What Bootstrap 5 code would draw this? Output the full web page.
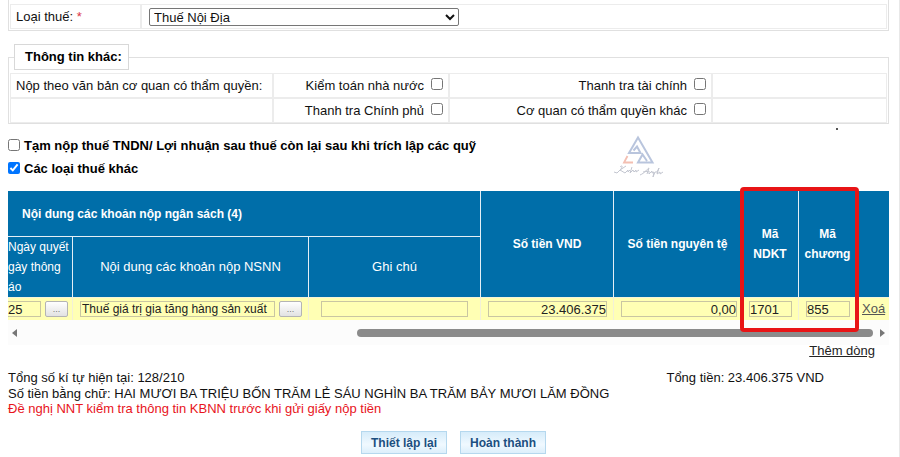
<!DOCTYPE html>
<html lang="vi">
<head>
<meta charset="utf-8">
<meta name="viewport" content="width=device-width, initial-scale=1">
<title>Giấy nộp tiền</title>
<link rel="stylesheet" href="https://cdn.jsdelivr.net/npm/bootstrap@5.3.0/dist/css/bootstrap.min.css">
<style>
body{font-family:"Liberation Sans",Arial,sans-serif;font-size:13px;line-height:16px;color:#111;background:#fff}
.page{padding:0 10px 0 8px;border-right:1px solid #e8e8e8;min-height:100vh}
input[type=checkbox]{width:12px;height:12px;margin:0;flex:none}
.panel{border:1px solid #e0e0e0;border-top:0;padding:4px 1px 1px}
.panel table,.other table{width:100%;table-layout:fixed;border-collapse:separate;border-spacing:0}
.panel td,.other td{border:1px solid #ececec;height:25px;padding:0 5px;vertical-align:middle}
.c-label{width:131px}
.c-doc{width:263px}.c-a{width:176px}.c-b{width:263px}
.tax-type{width:310px;height:18px;font-size:13px;line-height:16px;padding:0;margin-left:2px;border:1px solid #767676;border-radius:2px;background:#fff;color:#111}
.other{border:1px solid #e0e0e0;padding:0 1px;margin:13px 0 0}
.other legend{float:none;width:auto;font-size:13px;line-height:16px;font-weight:bold;border:1px solid #d8d8d8;padding:4px 6px 4px 10px;margin:0 0 3px 4px;color:#000}
.tick{gap:7px}
.tick input{margin-bottom:4px}
.opts{padding-top:14px;gap:7px;color:#000}
.opts label{gap:4px}
.opts input{margin-bottom:3px}
.logo-mark{right:223px;top:10px;width:54px;height:46px}
.speck{right:51px;top:4px;width:2px;height:2px;background:#555}
.grid-wrap{margin-top:14px}
.grid-table{width:100%;table-layout:fixed;border-collapse:separate;border-spacing:0}
.grid-table th{background:#006ea9;color:#fff;text-align:center;vertical-align:middle;font-size:12px;line-height:20px;border-right:1px solid #e4eff6;padding:0}
.grid-table th.sub{font-weight:normal;font-size:13px;height:61px;border-top:1px solid #e4eff6}
.grid-table th.top-head{height:45px;text-align:left;padding-left:14px}
.grid-table th.date-head{text-align:left;font-size:12px}
.grid-table th.edge{border-right:0}
.grid-table td{background:#ffffb4;height:23px;padding:0 6px 0 7px;border-right:1px solid #f2f0d8;border-top:1px solid #f4f4d8}
.grid-table td.date-cell{padding:0 4px 0 0}
.grid-table td:last-child{border-right:0;padding:0 5px}
.grid-table input{width:100%;height:16px;border:1px solid #c9c6a2;background:transparent;padding:0;font-size:13px;line-height:14px;color:#222;border-radius:0;min-width:0}
.grid-table .date-cell input{border-left:0}
.grid-table .desc{font-size:12px;padding-left:1px}
.pick{width:23px;height:16px;flex:none;padding:0;border:1px solid #b4b4b4;border-radius:2px;background:linear-gradient(#fff,#e2e2e2);font-size:9px;line-height:12px;color:#777}
.w-date{width:65px}.w-note{width:172px}.w-vnd{width:133px}.w-orig{width:128px}.w-code{width:57px}.w-chap{width:58px}.w-del{width:32px}
.grid-table a{color:#555}
.scroll-line{height:25px;padding:0 4px;background:#fcfcfc}
.scroll-line svg{width:6px;height:8px;flex:none}
.thumb{height:8px;border-radius:4px;background:#8b8b8b;width:516px;margin-right:6px}
.frame{right:30px;top:-4px;bottom:13px;width:119px;border:4px solid #e81416;border-radius:4px}
.add-line{padding-right:14px;margin-top:-2px}
.add-line a{color:#222}
.totals{margin-top:11px;padding-right:65px}
.warn{color:#e8141c;line-height:14px}
.act{height:23px;border:1px solid #b5d8ee;border-radius:0;background:linear-gradient(#d6ecfa,#f0f9ff 60%,#dceffb);color:#1c4f80;font-weight:bold;font-size:12px;line-height:20px;padding:0 9px}
.acts{gap:13px;margin-top:15px;padding-left:10px}
</style>
</head>
<body>
<main class="page">
  <section class="panel">
    <table>
      <tr><td class="c-label"><label for="tax">Loại thuế: <span class="text-danger">*</span></label></td>
      <td><select id="tax" class="tax-type d-block"><option>Thuế Nội Địa</option></select></td></tr>
    </table>
  </section>

  <fieldset class="other">
    <legend>Thông tin khác:</legend>
    <table>
      <tr><td class="c-doc text-nowrap">Nộp theo văn bản cơ quan có thẩm quyền:</td>
        <td class="c-a"><label class="tick d-flex justify-content-end align-items-center">Kiểm toán nhà nước <input type="checkbox"></label></td>
        <td class="c-b"><label class="tick d-flex justify-content-end align-items-center">Thanh tra tài chính <input type="checkbox"></label></td><td></td></tr>
      <tr><td></td>
        <td><label class="tick d-flex justify-content-end align-items-center">Thanh tra Chính phủ <input type="checkbox"></label></td>
        <td><label class="tick d-flex justify-content-end align-items-center">Cơ quan có thẩm quyền khác <input type="checkbox"></label></td><td></td></tr>
    </table>
  </fieldset>

  <section class="position-relative">
    <div class="opts d-flex flex-column align-items-start fw-bold">
      <label class="d-flex align-items-center"><input type="checkbox">Tạm nộp thuế TNDN/ Lợi nhuận sau thuế còn lại sau khi trích lập các quỹ</label>
      <label class="d-flex align-items-center"><input type="checkbox" checked>Các loại thuế khác</label>
    </div>
    <svg class="logo-mark position-absolute" viewBox="0 0 54 46" fill="none" aria-hidden="true">
      <path d="M21.5 16.5 25 12.5 28.5 19H17L26 3.500 40.500 28.500H26L30.500 20.500 35 27" stroke="#b9c5dd" stroke-width="2"/>
      <path d="M15.500 22 12 28.500H21" stroke="#f3bfb2" stroke-width="1.800"/>
      <path d="M8 33C10 31 11 32 9 35L5 39 2 38M14 32 8 36 13 39 16 36 16 38 18 36M20 33 18 39 21 36 22 38 24 36 24 38 27 36M28 41C33 39 35 35 37 34L35 40M31 38 37 37 37 40 40 37 40 39 42 38 41 43 43 38 45 38 47 34 45 40 48 38 48 40 51 38" stroke="#c3c6d0" stroke-width="1"/>
    </svg>
    <span class="speck position-absolute"></span>
  </section>

  <section class="position-relative grid-wrap">
    <table class="grid-table">
      <colgroup><col class="w-date"><col><col class="w-note"><col class="w-vnd"><col class="w-orig"><col class="w-code"><col class="w-chap"><col class="w-del"></colgroup>
      <thead>
        <tr><th colspan="3" class="top-head">Nội dung các khoản nộp ngân sách (4)</th>
          <th rowspan="2">Số tiền VND</th><th rowspan="2">Số tiền nguyên tệ</th><th rowspan="2">Mã<br>NDKT</th><th rowspan="2">Mã<br>chương</th><th rowspan="2" class="edge"></th></tr>
        <tr><th class="sub date-head text-nowrap">Ngày quyết<br>gày thông<br>áo</th><th class="sub">Nội dung các khoản nộp NSNN</th><th class="sub">Ghi chú</th></tr>
      </thead>
      <tbody>
        <tr>
          <td class="date-cell"><div class="d-flex align-items-center gap-1"><input value="25" aria-label="Ngày"><button type="button" class="pick">...</button></div></td>
          <td><div class="d-flex align-items-center gap-1"><input class="desc" value="Thuế giá trị gia tăng hàng sản xuất" aria-label="Nội dung"><button type="button" class="pick">...</button></div></td>
          <td class="px-2"><div class="px-1 d-flex"><input aria-label="Ghi chú"></div></td>
          <td><div class="d-flex"><input class="text-end" value="23.406.375" aria-label="Số tiền VND"></div></td>
          <td class="pe-1"><div class="d-flex"><input class="text-end" value="0,00" aria-label="Số tiền nguyên tệ"></div></td>
          <td><div class="d-flex"><input value="1701" aria-label="Mã NDKT"></div></td>
          <td><div class="d-flex"><input value="855" aria-label="Mã chương"></div></td>
          <td><a href="#">Xoá</a></td></tr>
      </tbody>
    </table>
    <div class="scroll-line d-flex align-items-center">
      <svg viewBox="0 0 6 8"><path d="M5 0V8L0 4Z" fill="#777"/></svg>
      <div class="thumb ms-auto"></div>
      <svg viewBox="0 0 6 8"><path d="M1 0V8L6 4Z" fill="#777"/></svg>
    </div>
    <div class="frame position-absolute"></div>
  </section>

  <div class="add-line text-end"><a href="#">Thêm dòng</a></div>
  <div class="totals d-flex justify-content-between"><span>Tổng số kí tự hiện tại: 128/210</span><span>Tổng tiền: 23.406.375 VND</span></div>
  <div class="words">Số tiền bằng chữ: HAI MƯƠI BA TRIỆU BỐN TRĂM LẺ SÁU NGHÌN BA TRĂM BẢY MƯƠI LĂM ĐỒNG</div>
  <div class="warn">Đề nghị NNT kiểm tra thông tin KBNN trước khi gửi giấy nộp tiền</div>
  <div class="acts d-flex justify-content-center">
    <button type="button" class="act">Thiết lập lại</button>
    <button type="button" class="act">Hoàn thành</button>
  </div>
</main>
<script src="https://cdn.jsdelivr.net/npm/bootstrap@5.3.0/dist/js/bootstrap.bundle.min.js"></script>
</body>
</html>
